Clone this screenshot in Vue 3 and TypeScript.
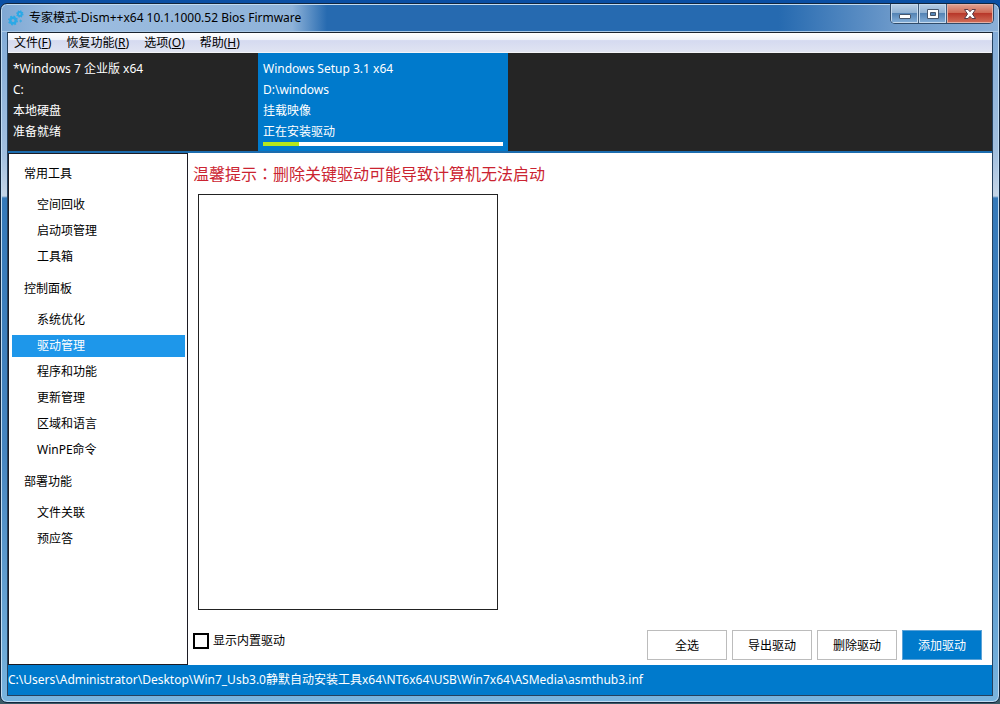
<script setup lang="ts">
import { ref } from 'vue'

interface NavGroup { title: string; items: string[] }
interface MenuEntry { label: string; key: string }
interface ImageTab { lines: string[]; progress?: number }

const menus: MenuEntry[] = [
  { label: '文件', key: 'F' },
  { label: '恢复功能', key: 'R' },
  { label: '选项', key: 'O' },
  { label: '帮助', key: 'H' },
]
const tabs: ImageTab[] = [
  { lines: ['*Windows 7 企业版 x64', 'C:', '本地硬盘', '准备就绪'] },
  { lines: ['Windows Setup 3.1 x64', 'D:\\windows', '挂载映像', '正在安装驱动'], progress: 15 },
]
const groups: NavGroup[] = [
  { title: '常用工具', items: ['空间回收', '启动项管理', '工具箱'] },
  { title: '控制面板', items: ['系统优化', '驱动管理', '程序和功能', '更新管理', '区域和语言', 'WinPE命令'] },
  { title: '部署功能', items: ['文件关联', '预应答'] },
]
const actions: string[] = ['全选', '导出驱动', '删除驱动', '添加驱动']

const activeTab = ref(1)
const activeItem = ref('驱动管理')
const showBuiltIn = ref(false)
const statusPath = 'C:\\Users\\Administrator\\Desktop\\Win7_Usb3.0静默自动安装工具x64\\NT6x64\\USB\\Win7x64\\ASMedia\\asmthub3.inf'
</script>

<template>
  <div class="desktop">
    <div class="window">
      <header class="titlebar">
        <svg class="logo" width="16" height="16" viewBox="0 0 16 16" aria-hidden="true">
          <g fill="none" stroke="#2ba9e6">
            <circle cx="5" cy="10.5" r="2.7" stroke-width="2.4" />
            <circle cx="5" cy="10.5" r="4.2" stroke-width="1.6" stroke-dasharray="1.7 1.6" />
            <circle cx="11.8" cy="4" r="1.9" stroke-width="2" />
            <circle cx="11.8" cy="4" r="3" stroke-width="1.4" stroke-dasharray="1.2 1.16" />
            <circle cx="12.6" cy="11" r="0.8" stroke-width="1" />
          </g>
        </svg>
        <h1 class="title">专家模式-Dism++x64 10.1.1000.52 Bios Firmware</h1>
        <div class="controls">
          <button class="ctl" aria-label="最小化">
            <svg width="14" height="12" viewBox="0 0 14 12"><rect x="1.5" y="6.5" width="11" height="4" rx="0.5" fill="#fff" stroke="#46566c" /></svg>
          </button>
          <button class="ctl" aria-label="最大化">
            <svg width="14" height="12" viewBox="0 0 14 12"><path fill="#fff" stroke="#46566c" fill-rule="evenodd" d="M1.5 1.5h11v9h-11zM4.5 4.5v3h5v-3z" /></svg>
          </button>
          <button class="ctl close" aria-label="关闭">
            <svg width="14" height="12" viewBox="0 0 14 12"><path fill="#fff" stroke="#5a3a44" d="M1.5 1.5h3.5l2 2.2 2-2.2h3.5L9.5 6l3 4.5H9L7 8.3 5 10.5H1.5L4.500 6z" /></svg>
          </button>
        </div>
      </header>

      <div class="client">
        <nav class="menubar">
          <button v-for="m in menus" :key="m.key" class="menu">{{ m.label }}(<u>{{ m.key }}</u>)</button>
        </nav>

        <div class="tabs">
          <button
            v-for="(t, i) in tabs"
            :key="i"
            class="tab"
            :class="{ active: i === activeTab }"
            @click="activeTab = i"
          >
            <span v-for="l in t.lines" :key="l" class="line">{{ l }}</span>
            <span v-if="t.progress" class="track"><span class="fill" :style="{ width: t.progress + '%' }"></span></span>
          </button>
        </div>

        <div class="body">
          <aside class="sidebar">
            <template v-for="g in groups" :key="g.title">
              <h2 class="group">{{ g.title }}</h2>
              <button
                v-for="item in g.items"
                :key="item"
                class="item"
                :class="{ active: item === activeItem }"
                @click="activeItem = item"
              >{{ item }}</button>
            </template>
          </aside>

          <main class="content">
            <p class="warning">温馨提示<span class="colon">：</span>删除关键驱动可能导致计算机无法启动</p>
            <div class="list"></div>
            <div class="footer">
              <label class="check"><input v-model="showBuiltIn" type="checkbox" />显示内置驱动</label>
              <div class="actions">
                <button v-for="(a, i) in actions" :key="a" class="btn" :class="{ primary: i === 3 }">{{ a }}</button>
              </div>
            </div>
          </main>
        </div>

        <footer class="status">{{ statusPath }}</footer>
      </div>
    </div>
  </div>
</template>

<style>
body {
  margin: 0;
}
</style>

<style scoped>
* {
  box-sizing: border-box;
}
.desktop {
  display: flex;
  min-height: 100vh;
  padding: 3px 0 1px;
  background: linear-gradient(#0a4fa4, #0b3f80 50%, #3b5a66);
  font: 12px/21px "Noto Sans", "Noto Sans CJK SC", sans-serif;
  color: #000;
}
button {
  margin: 0;
  padding: 0;
  border: 0;
  border-radius: 0;
  background: none;
  font: inherit;
  color: inherit;
  text-align: left;
}
.window {
  flex: 1;
  display: flex;
  flex-direction: column;
  min-width: 0;
  padding: 0 6px 6px;
  border: 1px solid #12263e;
  border-radius: 7px;
  background: linear-gradient(#7ba7d6, #a3c0df 150px, #c4d4e6 192px, #3579b9 194px, #4685c0 450px, #79b4de);
  box-shadow: inset 0 0 0 1px #c2dcf2;
}
.titlebar {
  display: flex;
  height: 27px;
  margin: 1px -5px 0;
  padding-left: 6px;
  border-bottom: 1px solid #a9c8e6;
  border-radius: 6px 6px 0 0;
  background: linear-gradient(90deg, #7fa8d3, #9dbde0 60px, #8fb3d9 290px, #266ab0 325px, #266ab0 78%, #6f9bcb 90%, #8ab0d8);
}
.logo {
  margin-top: 5px;
}
.title {
  flex: 1;
  margin: 2px 0 0 5px;
  font-size: 12px;
  font-weight: 400;
  line-height: 21px;
}
.controls {
  display: flex;
  height: 20px;
  margin: -1px 4px 0 0;
  border: 1px solid #304a68;
  border-top: 0;
  border-radius: 0 0 5px 5px;
  overflow: hidden;
}
.ctl {
  display: flex;
  align-items: center;
  justify-content: center;
  width: 28px;
  border-right: 1px solid #3c5878;
  background: linear-gradient(#b9cfe6, #91b2d3 45%, #5484b5 50%, #86b0da);
  box-shadow: inset 0 0 0 1px #c6daee;
}
.ctl.close {
  width: 46px;
  border-right: 0;
  background: linear-gradient(#e0a595, #cf6a55 45%, #b8382a 50%, #d2705a);
  box-shadow: inset 0 0 0 1px #e5b0a5;
}
.client {
  flex: 1;
  display: flex;
  flex-direction: column;
  border: 1px solid #24415f;
  border-top-color: #1a2430;
  background: #fff;
}
.menubar {
  display: flex;
  gap: 15px;
  height: 20px;
  padding-left: 6px;
  background: linear-gradient(#fff, #f0f3fa 35%, #d5daf0 40%, #e0e4f2);
  border-bottom: 1px solid #f4f4f8;
}
.menu {
  line-height: 20px;
}
.tabs {
  display: flex;
  height: 100px;
  background: #252525;
  border-bottom: 2px solid #1c6cae;
}
.tab {
  display: flex;
  flex-direction: column;
  width: 250px;
  padding: 5px 5px 0;
  color: #fff;
}
.tab.active {
  background: #007acc;
}
.line {
  height: 21px;
}
.track {
  height: 4px;
  background: #fff;
}
.fill {
  display: block;
  height: 100%;
  background: #b5e61d;
}
.body {
  flex: 1;
  display: flex;
}
.sidebar {
  display: flex;
  flex-direction: column;
  gap: 4px;
  width: 180px;
  padding: 3px 2px 0 3px;
  border: 1px solid #1c1c24;
}
.group {
  margin: 0;
  padding-left: 12px;
  font-size: 12px;
  font-weight: 400;
  line-height: 33px;
}
.item {
  height: 22px;
  padding-left: 25px;
  line-height: 22px;
}
.item.active {
  background: #1e97ea;
  color: #fff;
}
.content {
  flex: 1;
  display: flex;
  flex-direction: column;
  padding: 8px 10px 5px 5px;
}
.warning {
  margin: 0 0 8px;
  font-size: 16px;
  line-height: 24px;
  color: #cb2431;
}
.colon {
  font-family: "Noto Sans CJK TC", sans-serif;
}
.list {
  flex: 1;
  width: 300px;
  margin: 0 0 20px 5px;
  border: 1px solid #222;
}
.footer {
  display: flex;
  justify-content: space-between;
}
.check {
  display: flex;
  align-items: center;
  gap: 4px;
  height: 21px;
}
.check input {
  appearance: none;
  width: 16px;
  height: 16px;
  margin: 0;
  border: 2px solid #000;
  background: #fff;
}
.check input:checked {
  background: #007acc;
}
.actions {
  display: flex;
  gap: 5px;
}
.btn {
  width: 80px;
  height: 30px;
  border: 1px solid #bcbcbc;
  background: #fff;
  text-align: center;
}
.btn.primary {
  border-color: #5ba3d8;
  background: #007acc;
  color: #fff;
}
.status {
  height: 30px;
  line-height: 29px;
  background: #007acc;
  color: #fff;
}
</style>
